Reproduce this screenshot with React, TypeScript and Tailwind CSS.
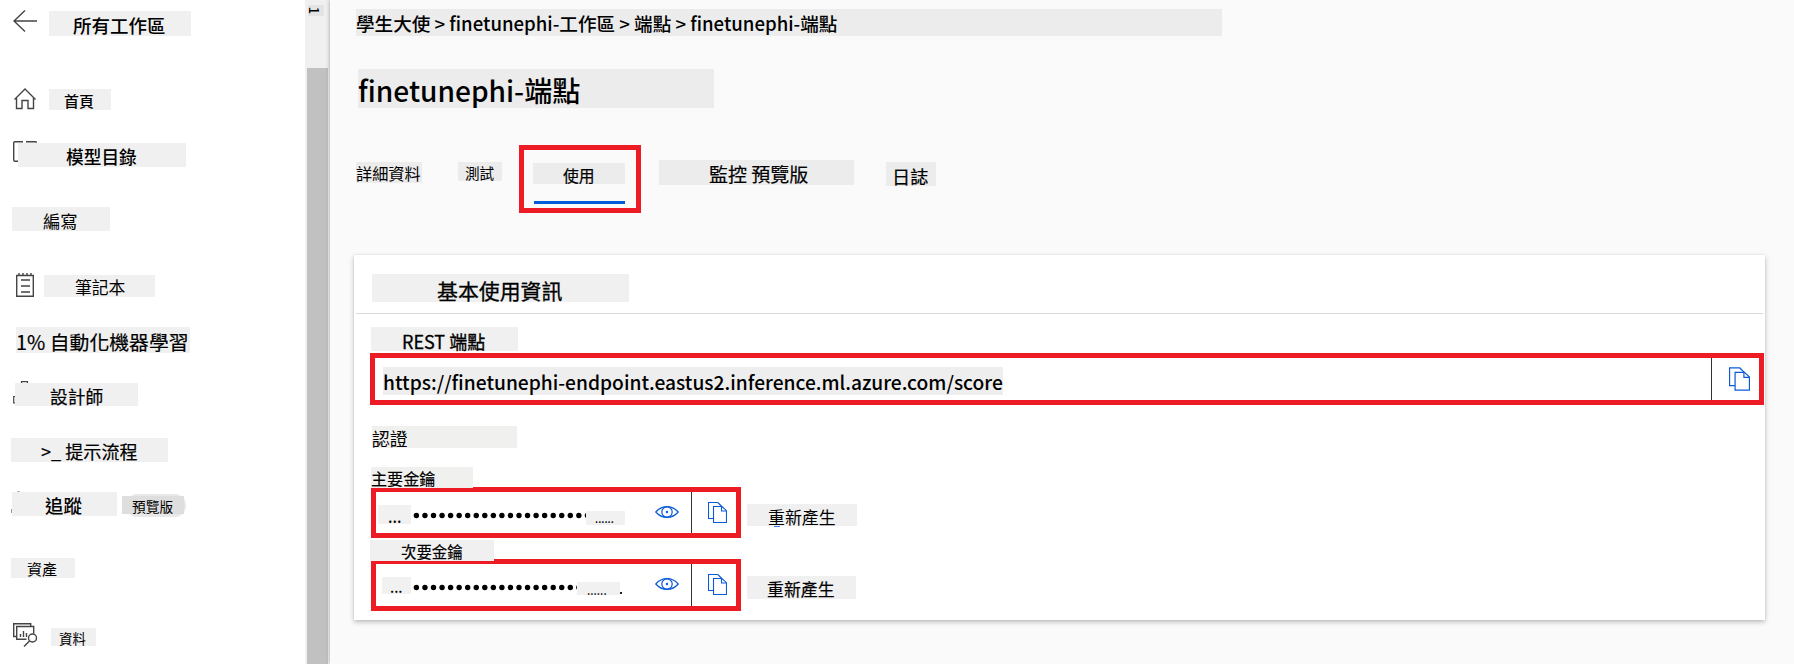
import React from "react";
import clsx from "clsx";

type LabelProps = { className: string; children: React.ReactNode };

function Label({ className, children }: LabelProps) {
  return (
    <div className={clsx("relative shrink-0 whitespace-pre text-black", className)}>{children}</div>
  );
}

function CopyIcon({ className }: { className: string }) {
  return (
    <svg className={className} viewBox="0 0 19 21" fill="none" stroke="#0b5bd8" strokeWidth="1.1">
      <path d="M5.5 16.5H.5V.5h9.3l4 4" />
      <path d="M5.500 4.500h8.500l4.500 4.200v11.800h-13z" />
      <path d="M13.500 4.500v4.500h5" />
    </svg>
  );
}

function EyeIcon({ className }: { className: string }) {
  return (
    <svg className={className} viewBox="0 0 24 12" fill="none" stroke="#0b5bd8" strokeWidth="1.2">
      <path d="M.8 6C4 2.300 7.700.7 12 .7S20 2.300 23.200 6C20 9.700 16.300 11.300 12 11.300S4 9.700.8 6z" />
      <circle cx="12" cy="6" r="5.200" />
      <circle cx="12" cy="6" r="1.200" fill="#0b5bd8" stroke="none" />
    </svg>
  );
}

function Sidebar() {
  return (
    <nav className="flex w-[305px] shrink-0 flex-col bg-white">
      <div className="mt-[10px] flex h-[26px] items-start pl-[13px]">
        <svg className="h-[23px] w-[24px]" viewBox="0 0 24 23" fill="none" stroke="#444" strokeWidth="1.4">
          <path d="M24 11H1M12 .5 1 11l11 10.500" />
        </svg>
        <Label className="mt-px ml-[12px] h-[25px] w-[142px] bg-[#f0f0f0] pl-[24px] text-[18.500px] leading-[28px]">所有工作區</Label>
      </div>
      <div className="mt-[52px] flex h-[22px] items-start pl-[14px]">
        <svg className="h-[22px] w-[22px]" viewBox="0 0 22 22" fill="none" stroke="#444" strokeWidth="1.4">
          <path d="M.5 11.500 11 1l10.500 10.500M2.500 10v10.500h5.500v-8h6v8h5.500V10" />
        </svg>
        <Label className="mt-px ml-[13px] h-[21px] w-[62px] bg-[#f0f0f0] pl-[15px] text-[15px] leading-[23px]">首頁</Label>
      </div>
      <div className="mt-[31px] flex h-[26px] items-start pl-[13px]">
        <svg className="h-[21px] w-[24px]" viewBox="0 0 24 21" fill="none" stroke="#444" strokeWidth="1.400">
          <path d="M10 .7H2Q.7.7.7 2v17q0 1.300 1.300 1.300h8M13 .7h9.500q1 0 1 1" />
        </svg>
        <Label className="mt-[2px] -ml-[19px] h-[24px] w-[168px] bg-[#f0f0f0] pl-[48px] text-[17.700px] leading-[27px]">模型目錄</Label>
      </div>
      <Label className="mt-[40px] ml-[12px] h-[24px] w-[98px] bg-[#f0f0f0] pl-[31px] text-[17.300px] leading-[27px] font-normal">編寫</Label>
      <div className="mt-[42px] flex h-[25px] items-start pl-[16px]">
        <svg className="h-[24px] w-[18px]" viewBox="0 0 18 24" fill="none" stroke="#444" strokeWidth="1.400">
          <path d="M.7 2.500h16.600v20.800H.7zM3 0v2.500M7 0v2.500M11 0v2.500M15 0v2.500M5 7h9M5 13h9M5 19h9" />
        </svg>
        <Label className="mt-[2px] ml-[10px] h-[22px] w-[111px] bg-[#f0f0f0] pl-[31px] text-[16.800px] leading-[24px] font-normal">筆記本</Label>
      </div>
      <Label className="mt-[29px] ml-[16px] h-[26px] w-[174px] bg-[#f0f0f0] text-[19.850px] leading-[30px] font-normal [-webkit-text-stroke:0.2px_#000]">1% 自動化機器學習</Label>
      <div className="mt-[28px] flex h-[25px] items-start pl-[13px]">
        <svg className="h-[24px] w-[22px]" viewBox="0 0 22 24" fill="none" stroke="#444" strokeWidth="1.200">
          <path d="M8.500 5V.7h6V5M.7 15.500h5v6.500h-5z" />
        </svg>
        <Label className="mt-[2px] -ml-[20px] h-[23px] w-[123px] bg-[#f0f0f0] pl-[35px] text-[17.700px] leading-[26px] font-normal [-webkit-text-stroke:0.2px_#000]">設計師</Label>
      </div>
      <Label className="mt-[32px] ml-[11px] h-[24px] w-[157px] bg-[#f0f0f0] pl-[30px] text-[18.100px] leading-[26px] font-normal [-webkit-text-stroke:0.2px_#000]">&gt;_ 提示流程</Label>
      <div className="mt-[29px] flex h-[26px] items-start pl-[11px]">
        <svg className="h-[24px] w-[12px]" viewBox="0 0 12 24" fill="none" stroke="#999" strokeWidth="1">
          <path d="M6.500 .5h2M.5 18v4" />
        </svg>
        <Label className="mt-px -ml-[11px] h-[24px] w-[105px] bg-[#f0f0f0] pl-[33px] text-[18.500px] leading-[27px]">追蹤</Label>
        <div className="mt-[3px] ml-[9px] h-[23px] w-[60px] rounded-full bg-[#e8e8e8]">
          <Label className="mt-[2px] -ml-[4px] h-[18px] w-[62px] bg-[#dedede] pl-[10px] text-[13.700px] leading-[20px] font-normal">預覽版</Label>
        </div>
      </div>
      <Label className="mt-[41px] ml-[11px] h-[20px] w-[64px] bg-[#f0f0f0] pl-[16px] text-[15px] leading-[22px] font-normal">資產</Label>
      <div className="mt-[45px] flex items-start pl-[13px]">
        <svg className="h-[24px] w-[24px]" viewBox="0 0 24 24" fill="none" stroke="#444" strokeWidth="1.400">
          <path d="M3 13.500H.7V.7h17v2.500M13.500 16.300H3.700V3.500h17v7M7.500 14v-3M10.500 14V8M13.500 14v-4" />
          <circle cx="19.500" cy="15" r="4" />
          <path d="m16.500 18-5.500 5.500" />
        </svg>
        <Label className="mt-[5px] ml-[14px] h-[18px] w-[45px] bg-[#f0f0f0] pl-[8px] text-[13.400px] leading-[20px] font-normal">資料</Label>
      </div>
    </nav>
  );
}

function Scrollbar() {
  return (
    <div className="flex w-[25px] shrink-0 flex-col bg-[#f0f0f0] pl-[2px]">
      <div className="mt-[5px] ml-px flex h-[11px] w-[16px] items-center bg-[#e4e4e4] pl-[3px]">
        <span className="rotate-90 text-[13px] leading-none">1</span>
      </div>
      <div className="mt-[52px] w-[21px] grow bg-[#c1c1c1]" />
    </div>
  );
}

function Tabs() {
  return (
    <div className="mt-[37px] flex h-[68px] items-start">
      <Label className="mt-[17px] h-[21px] w-[66px] bg-[#ececec] text-[16.200px] leading-[23px] font-normal">詳細資料</Label>
      <Label className="mt-[17px] ml-[36px] h-[19px] w-[44px] bg-[#ececec] pl-[7px] text-[14.600px] leading-[22px] font-normal">測試</Label>
      <div className="ml-[17px] h-[68px] w-[122px] border-[5px] border-[#ed1c24] pt-[13px] pl-[9px]">
        <Label className="h-[21px] w-[92px] bg-[#ececec] pl-[30px] text-[15.800px] leading-[25px] font-normal [-webkit-text-stroke:0.2px_#000]">使用</Label>
        <div className="mt-[17px] ml-px h-[3px] w-[91px] bg-[#015cda]" />
      </div>
      <Label className="mt-[15px] ml-[18px] h-[25px] w-[195px] bg-[#ececec] pl-[50px] text-[19px] leading-[27px] font-normal [-webkit-text-stroke:0.2px_#000]">監控 預覽版</Label>
      <Label className="mt-[17px] ml-[32px] h-[24px] w-[50px] bg-[#ececec] pl-[6px] text-[18.200px] leading-[28px] font-normal [-webkit-text-stroke:0.2px_#000]">日誌</Label>
    </div>
  );
}

type KeyRowProps = {
  height: string;
  lead: React.ReactNode;
  dots: string;
  tail: React.ReactNode;
  action: React.ReactNode;
};

function KeyRow({ height, lead, dots, tail, action }: KeyRowProps) {
  return (
    <div className="flex items-start">
      <div className={clsx("flex w-[370px] shrink-0 border-[5px] border-[#ed1c24]", height)}>
        <div className="flex w-[315px] shrink-0 items-start">
          {lead}
          <svg className={clsx("mt-[20px] h-[7px] shrink-0", dots)} fill="#000">
            {Array.from({ length: 21 }, (_, i) => (
              <circle key={i} cx={4.400 + i * 8.550} cy="3.500" r="2.700" />
            ))}
          </svg>
          {tail}
        </div>
        <div className="w-px bg-[#333]" />
        <CopyIcon className="mt-[10px] ml-[16px] h-[21px] w-[19px]" />
      </div>
      {action}
    </div>
  );
}

function Card() {
  return (
    <section className="mt-[42px] -ml-[2px] flex h-[365px] w-[1411px] flex-col bg-white shadow-[0_2px_5px_rgba(0,0,0,0.25),0_0_1px_rgba(0,0,0,0.15)]">
      <Label className="mt-[19px] ml-[18px] h-[28px] w-[257px] bg-[#f0f0f0] pl-[65px] text-[20.900px] leading-[32px] font-normal [-webkit-text-stroke:0.3px_#000]">基本使用資訊</Label>
      <div className="mx-[2px] mt-[11px] h-px shrink-0 bg-[#d9d9d9]" />
      <Label className="mt-[13px] ml-[17px] h-[24px] w-[147px] bg-[#f0f0f0] pl-[31px] text-[18px] leading-[28px] font-normal [-webkit-text-stroke:0.3px_#000]">REST 端點</Label>
      <div className="mt-[2px] ml-[16px] flex h-[52px] w-[1394px] shrink-0 border-[5px] border-[#ed1c24]">
        <div className="w-[1336px] pt-[9px] pl-[8px]">
          <Label className="h-[28px] w-[620px] bg-[#eee] text-[19.200px] leading-[30px]">https://finetunephi-endpoint.eastus2.inference.ml.azure.com/score</Label>
        </div>
        <div className="w-px bg-[#333]" />
        <CopyIcon className="mt-[9px] ml-[17px] h-[24px] w-[21px]" />
      </div>
      <Label className="mt-[21px] ml-[18px] h-[22px] w-[145px] bg-[#f0f0ef] text-[17.800px] leading-[25px] font-normal">認證</Label>
      <Label className="z-10 mt-[19px] ml-[17px] h-[21px] w-[102px] bg-[#f0f0ef] text-[16.100px] leading-[23px] font-normal [-webkit-text-stroke:0.2px_#000]">主要金鑰</Label>
      <div className="-mt-px ml-[17px]">
        <KeyRow
          height="h-[51px]"
          dots="w-[174px]"
          lead={<Label className="mt-[13px] mr-px ml-[2px] h-[19px] w-[33px] bg-[#f1f1f1] pl-[10px] text-[15px] leading-[23px]">...</Label>}
          tail={
            <>
              <Label className="mt-[19px] h-[14px] w-[39px] bg-[#f1f1f1] pl-[9px] text-[10.500px] leading-[15px]">......</Label>
              <EyeIcon className="mt-[14px] ml-[30px] h-[12px] w-[24px]" />
            </>
          }
          action={
            <div className="mt-[17px] ml-[6px]">
              <Label className="h-[22px] w-[110px] bg-[#f0f0f0] pl-[21px] text-[16.900px] leading-[25px] font-normal">重新產生</Label>
              <div className="ml-[27px] h-px w-[6px] bg-[#3c7de0]" />
            </div>
          }
        />
      </div>
      <Label className="z-10 mt-[2px] ml-[16px] h-[21px] w-[124px] bg-[#f0f0f0] pl-[31px] text-[15.400px] leading-[23px] font-normal [-webkit-text-stroke:0.2px_#000]">次要金鑰</Label>
      <div className="-mt-[2px] ml-[17px]">
        <KeyRow
          height="h-[52px]"
          dots="w-[165px]"
          lead={<Label className="mt-[13px] mr-px ml-[6px] h-[17px] w-[29px] bg-[#f1f1f1] pl-[8px] text-[14px] leading-[20px]">...</Label>}
          tail={
            <>
              <Label className="mt-[18px] h-[13px] w-[43px] bg-[#f1f1f1] pl-[10px] text-[11px] leading-[17px]">......</Label>
              <div className="mt-[28px] h-[2px] w-[2px] bg-[#222]" />
              <EyeIcon className="mt-[14px] ml-[33px] h-[12px] w-[24px]" />
            </>
          }
          action={<Label className="mt-[17px] ml-[6px] h-[23px] w-[109px] bg-[#f0f0f0] pl-[20px] text-[16.900px] leading-[26px] font-normal [-webkit-text-stroke:0.2px_#000]">重新產生</Label>}
        />
      </div>
    </section>
  );
}

export default function App() {
  return (
    <div className="flex h-[664px] w-[1794px] overflow-hidden bg-white font-['Noto_Sans_CJK_TC',sans-serif] font-medium">
      <Sidebar />
      <Scrollbar />
      <main className="relative flex grow flex-col bg-[#fafafa] pl-[26px] shadow-[0_0_4px_rgba(0,0,0,0.35)]">
        <Label className="mt-[9px] h-[27px] w-[866px] bg-[#ececec] text-[18.600px] leading-[28px]">學生大使 &gt; finetunephi-工作區 &gt; 端點 &gt; finetunephi-端點</Label>
        <Label className="mt-[33px] ml-[2px] h-[39px] w-[356px] bg-[#ececec] text-[28.100px] leading-[42px]">finetunephi-端點</Label>
        <Tabs />
        <Card />
      </main>
    </div>
  );
}
